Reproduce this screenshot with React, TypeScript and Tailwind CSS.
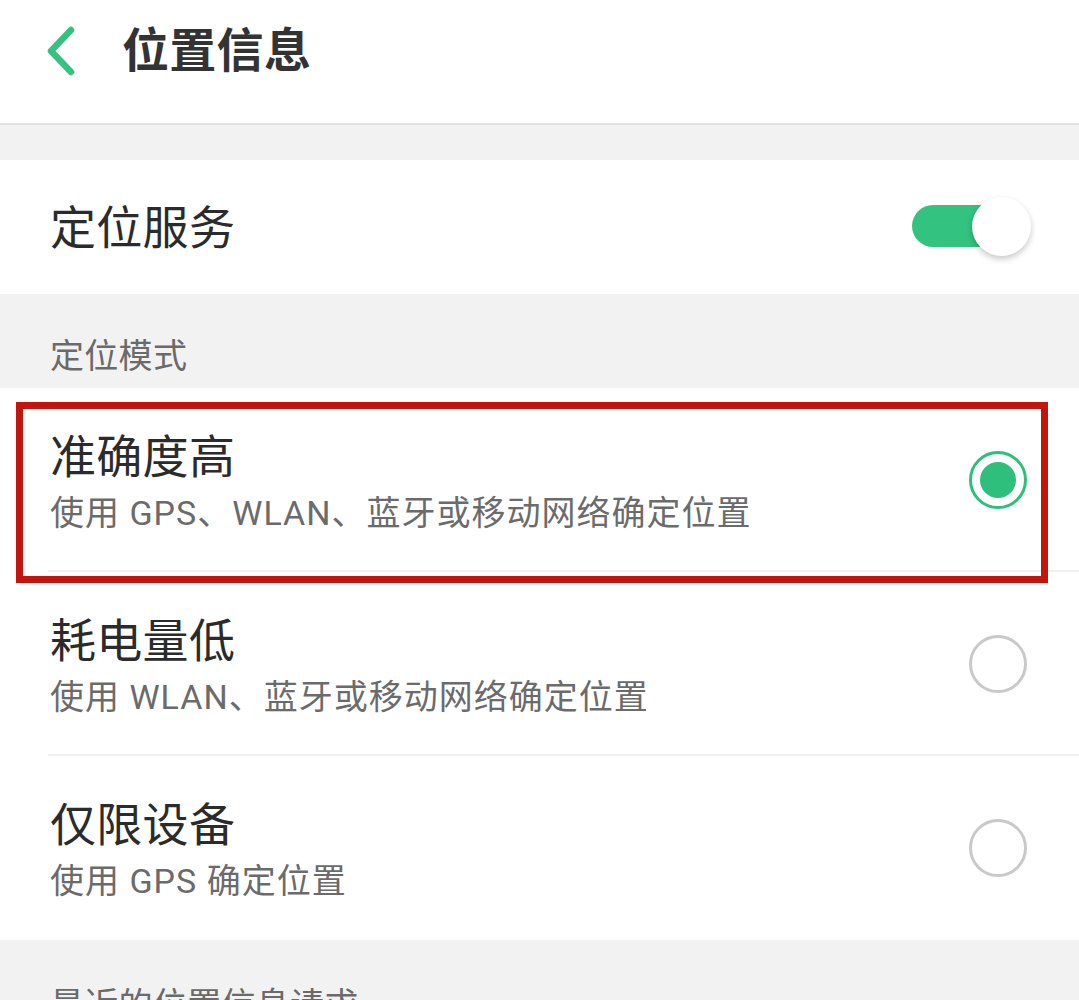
import React from "react";

const font = { fontFamily: "Roboto, 'Noto Sans CJK SC', 'Noto Sans', sans-serif" };

function Radio({ checked }: { checked: boolean }) {
  return checked ? (
    <div className="w-[58px] h-[58px] rounded-full border-[3px] border-[#2fbf7c] flex items-center justify-center shrink-0">
      <div className="w-[36px] h-[36px] rounded-full bg-[#2fbf7c]" />
    </div>
  ) : (
    <div className="w-[58px] h-[58px] rounded-full border-[3px] border-[#c9c9c9] shrink-0" />
  );
}

function Row({
  title,
  sub,
  checked,
  divider,
  highlight,
}: {
  title: string;
  sub: string;
  checked: boolean;
  divider: boolean;
  highlight?: boolean;
}) {
  return (
    <div className="relative h-[184px] bg-white">
      <div className="h-full flex items-center pl-[50px] pr-[52px]">
        <div className="flex-1 self-start pt-[41px] flex flex-col">
          <div className="text-[46px] leading-[56px] text-[#2b2b2b] tracking-[0.3px]">{title}</div>
          <div className="text-[34px] leading-[42px] text-[#6b6b6b] mt-[7px] tracking-[1px]">{sub}</div>
        </div>
        <Radio checked={checked} />
      </div>
      {divider && <div className="absolute left-[48px] right-0 bottom-0 h-[2px] bg-[#f0f0f0]" />}
      {highlight && (
        <div className="absolute left-[16px] top-[14px] w-[1032px] h-[181px] border-[7px] border-[#c3140e] pointer-events-none z-10" />
      )}
    </div>
  );
}

export default function App() {
  return (
    <div className="w-[1079px] h-[1000px] overflow-hidden bg-[#f2f2f2]" style={font}>
      <div className="h-[125px] bg-white border-b-2 border-[#e2e2e2] flex items-center">
        <div className="w-[122px] flex items-center pl-[44px] mt-[-22px]">
          <svg width="34" height="52" viewBox="0 0 34 52">
            <path d="M27 5 L7 26 L27 47" fill="none" stroke="#35c180" strokeWidth="6.5" strokeLinecap="round" strokeLinejoin="round" />
          </svg>
        </div>
        <div className="text-[47px] font-bold text-[#333333] mt-[-20px] tracking-[0.3px]">位置信息</div>
      </div>
      <div className="h-[35px]" />
      <div className="h-[134px] bg-white flex items-center pl-[50px] pr-[47px]">
        <div className="flex-1 text-[46px] text-[#2b2b2b] tracking-[0.3px] mt-[3px]">定位服务</div>
        <div className="relative w-[120px] h-[60px]">
          <div className="absolute left-0 top-[8px] w-[97px] h-[42px] rounded-full bg-[#33c27f]" />
          <div className="absolute left-[60px] top-0 w-[59px] h-[59px] rounded-full bg-white shadow-[0_3px_6px_rgba(0,0,0,0.22)]" />
        </div>
      </div>
      <div className="h-[94px] flex items-center pl-[50px] pt-[30px]">
        <div className="text-[34px] text-[#6a6a6a] tracking-[0.3px]">定位模式</div>
      </div>
      <Row title="准确度高" sub="使用 GPS、WLAN、蓝牙或移动网络确定位置" checked divider highlight />
      <Row title="耗电量低" sub="使用 WLAN、蓝牙或移动网络确定位置" checked={false} divider />
      <Row title="仅限设备" sub="使用 GPS 确定位置" checked={false} divider={false} />
      <div className="pl-[50px] pt-[40px]">
        <div className="text-[34px] text-[#6a6a6a] tracking-[0.3px]">最近的位置信息请求</div>
      </div>
    </div>
  );
}
